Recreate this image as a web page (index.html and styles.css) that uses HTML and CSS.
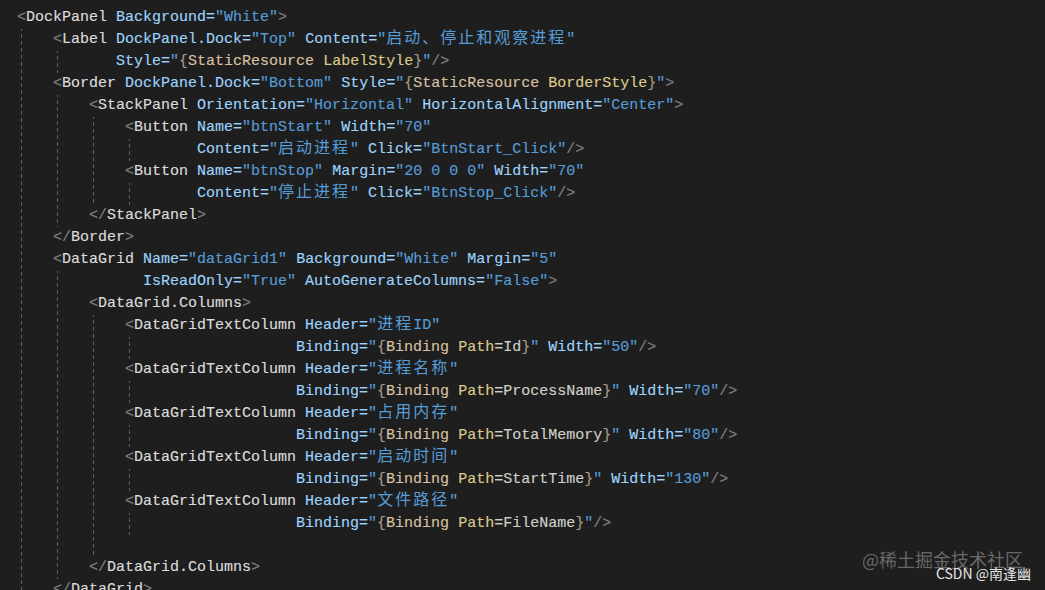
FILE: index.html
```html
<!DOCTYPE html>
<html lang="zh">
<head>
<meta charset="utf-8">
<title>XAML</title>
<link rel="stylesheet" href="styles.css">
</head>
<body>
<div class="editor">
<div class="code">
<div class="ln"><span class="p">&lt;</span><span class="t">DockPanel</span> <span class="a">Background=</span><span class="v">"White"</span><span class="p">&gt;</span></div>
<div class="g g0">
<div class="ln">    <span class="p">&lt;</span><span class="t">Label</span> <span class="a">DockPanel.Dock=</span><span class="v">"Top"</span> <span class="a">Content=</span><span class="v">"<span class="c">启动、停止和观察进程</span>"</span></div>
<div class="g g4">
<div class="ln">           <span class="a">Style=</span><span class="v">"</span><span class="b">{</span><span class="mc">StaticResource</span> <span class="mp">LabelStyle</span><span class="b">}</span><span class="v">"</span><span class="p">/&gt;</span></div>
</div>
<div class="ln">    <span class="p">&lt;</span><span class="t">Border</span> <span class="a">DockPanel.Dock=</span><span class="v">"Bottom"</span> <span class="a">Style=</span><span class="v">"</span><span class="b">{</span><span class="mc">StaticResource</span> <span class="mp">BorderStyle</span><span class="b">}</span><span class="v">"</span><span class="p">&gt;</span></div>
<div class="g g4">
<div class="ln">        <span class="p">&lt;</span><span class="t">StackPanel</span> <span class="a">Orientation=</span><span class="v">"Horizontal"</span> <span class="a">HorizontalAlignment=</span><span class="v">"Center"</span><span class="p">&gt;</span></div>
<div class="g g8">
<div class="ln">            <span class="p">&lt;</span><span class="t">Button</span> <span class="a">Name=</span><span class="v">"btnStart"</span> <span class="a">Width=</span><span class="v">"70"</span></div>
<div class="g g12">
<div class="ln">                    <span class="a">Content=</span><span class="v">"<span class="c">启动进程</span>"</span> <span class="a">Click=</span><span class="v">"BtnStart_Click"</span><span class="p">/&gt;</span></div>
</div>
<div class="ln">            <span class="p">&lt;</span><span class="t">Button</span> <span class="a">Name=</span><span class="v">"btnStop"</span> <span class="a">Margin=</span><span class="v">"20 0 0 0"</span> <span class="a">Width=</span><span class="v">"70"</span></div>
<div class="g g12">
<div class="ln">                    <span class="a">Content=</span><span class="v">"<span class="c">停止进程</span>"</span> <span class="a">Click=</span><span class="v">"BtnStop_Click"</span><span class="p">/&gt;</span></div>
</div>
</div>
<div class="ln">        <span class="p">&lt;/</span><span class="t">StackPanel</span><span class="p">&gt;</span></div>
</div>
<div class="ln">    <span class="p">&lt;/</span><span class="t">Border</span><span class="p">&gt;</span></div>
<div class="ln">    <span class="p">&lt;</span><span class="t">DataGrid</span> <span class="a">Name=</span><span class="v">"dataGrid1"</span> <span class="a">Background=</span><span class="v">"White"</span> <span class="a">Margin=</span><span class="v">"5"</span></div>
<div class="g g4">
<div class="ln">              <span class="a">IsReadOnly=</span><span class="v">"True"</span> <span class="a">AutoGenerateColumns=</span><span class="v">"False"</span><span class="p">&gt;</span></div>
<div class="ln">        <span class="p">&lt;</span><span class="t">DataGrid.Columns</span><span class="p">&gt;</span></div>
<div class="g g8">
<div class="ln">            <span class="p">&lt;</span><span class="t">DataGridTextColumn</span> <span class="a">Header=</span><span class="v">"<span class="c">进程</span>ID"</span></div>
<div class="g g12">
<div class="ln">                               <span class="a">Binding=</span><span class="v">"</span><span class="b">{</span><span class="mc">Binding</span> <span class="mp">Path</span><span class="mv">=Id</span><span class="b">}</span><span class="v">"</span> <span class="a">Width=</span><span class="v">"50"</span><span class="p">/&gt;</span></div>
</div>
<div class="ln">            <span class="p">&lt;</span><span class="t">DataGridTextColumn</span> <span class="a">Header=</span><span class="v">"<span class="c">进程名称</span>"</span></div>
<div class="g g12">
<div class="ln">                               <span class="a">Binding=</span><span class="v">"</span><span class="b">{</span><span class="mc">Binding</span> <span class="mp">Path</span><span class="mv">=ProcessName</span><span class="b">}</span><span class="v">"</span> <span class="a">Width=</span><span class="v">"70"</span><span class="p">/&gt;</span></div>
</div>
<div class="ln">            <span class="p">&lt;</span><span class="t">DataGridTextColumn</span> <span class="a">Header=</span><span class="v">"<span class="c">占用内存</span>"</span></div>
<div class="g g12">
<div class="ln">                               <span class="a">Binding=</span><span class="v">"</span><span class="b">{</span><span class="mc">Binding</span> <span class="mp">Path</span><span class="mv">=TotalMemory</span><span class="b">}</span><span class="v">"</span> <span class="a">Width=</span><span class="v">"80"</span><span class="p">/&gt;</span></div>
</div>
<div class="ln">            <span class="p">&lt;</span><span class="t">DataGridTextColumn</span> <span class="a">Header=</span><span class="v">"<span class="c">启动时间</span>"</span></div>
<div class="g g12">
<div class="ln">                               <span class="a">Binding=</span><span class="v">"</span><span class="b">{</span><span class="mc">Binding</span> <span class="mp">Path</span><span class="mv">=StartTime</span><span class="b">}</span><span class="v">"</span> <span class="a">Width=</span><span class="v">"130"</span><span class="p">/&gt;</span></div>
</div>
<div class="ln">            <span class="p">&lt;</span><span class="t">DataGridTextColumn</span> <span class="a">Header=</span><span class="v">"<span class="c">文件路径</span>"</span></div>
<div class="g g12">
<div class="ln">                               <span class="a">Binding=</span><span class="v">"</span><span class="b">{</span><span class="mc">Binding</span> <span class="mp">Path</span><span class="mv">=FileName</span><span class="b">}</span><span class="v">"</span><span class="p">/&gt;</span></div>
</div>
<div class="ln"> </div>
</div>
<div class="ln">        <span class="p">&lt;/</span><span class="t">DataGrid.Columns</span><span class="p">&gt;</span></div>
</div>
<div class="ln">    <span class="p">&lt;/</span><span class="t">DataGrid</span><span class="p">&gt;</span></div>
</div>
</div>
<div class="marks">
<div class="wm">@稀土掘金技术社区</div>
<div class="csdn">CSDN @南逢幽</div>
</div>
</div>
</body>
</html>
```

FILE: styles.css
```css
html, body {
  margin: 0;
  padding: 0;
  background: #1e1e1e;
  width: 1045px;
  height: 590px;
  overflow: hidden;
}

.editor {
  position: relative;
  width: 1045px;
  height: 590px;
  overflow: hidden;
  background: #1e1e1e;
}

.code {
  padding: 7px 0 0 17px;
  font-family: "Liberation Mono", "Noto Sans CJK SC", monospace;
  font-size: 15px;
  color: #dcdcdc;
  -webkit-text-stroke: 0.15px currentColor;
}

.ln {
  height: 22px;
  line-height: 22px;
  white-space: pre;
  overflow: visible;
}

.g {
  background-repeat: repeat-y;
  background-size: 1px 7px;
  background-image: linear-gradient(to bottom, #5c5c5c 0 4px, transparent 4px 7px);
}
.g0 { background-position: 4px -2px; }
.g4 { background-position: 40px -2px; }
.g8 { background-position: 76px -2px; }
.g12 { background-position: 112px -2px; }

.p { color: #808080; }
.t { color: #dcdcdc; }
.a { color: #9cd3fb; }
.v { color: #569cd6; }
.b { color: #a89c88; }
.mc { color: #d8c0a0; }
.mp { color: #dcc88a; }
.mv { color: #d0d0c8; }

.c {
  font-family: "Noto Sans CJK SC", sans-serif;
  font-size: 16px;
  letter-spacing: 2px;
  line-height: 0;
  -webkit-text-stroke: 0;
}

.marks {
  position: absolute;
  right: 14px;
  bottom: 9px;
  display: flex;
  flex-direction: column;
  align-items: flex-end;
  font-family: "Noto Sans CJK SC", "Noto Sans", sans-serif;
}

.wm {
  font-size: 18px;
  line-height: 20px;
  color: rgba(200, 200, 200, 0.45);
  margin-right: 8px;
  margin-bottom: -4px;
}

.csdn {
  font-size: 14px;
  line-height: 16px;
  color: #e6e6e6;
}
```
